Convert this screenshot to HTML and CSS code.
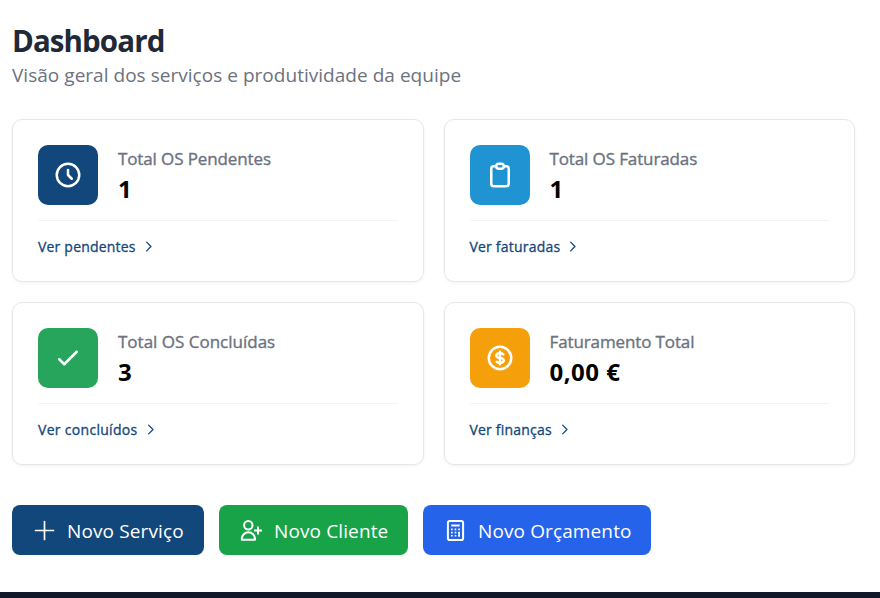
FILE: index.html
```html
<!DOCTYPE html>
<html lang="pt">
<head>
<meta charset="utf-8">
<title>Dashboard</title>
<link rel="stylesheet" href="styles.css">
</head>
<body>
<main class="page">
  <header class="heading">
    <h1 class="title">Dashboard</h1>
    <p class="subtitle">Visão geral dos serviços e produtividade da equipe</p>
  </header>
  <section class="cards">
    <article class="card">
      <div class="summary">
        <div class="tile navy"><svg class="icon" viewBox="0 0 24 24"><path d="M12 8v4l3 3m6-3a9 9 0 11-18 0 9 9 0 0118 0z"/></svg></div>
        <div><div class="label">Total OS Pendentes</div><div class="value">1</div></div>
      </div>
      <a class="link"><span>Ver pendentes</span><svg class="chevron" viewBox="0 0 24 24"><path d="M9 5l7 7-7 7"/></svg></a>
    </article>
    <article class="card">
      <div class="summary">
        <div class="tile sky"><svg class="icon" viewBox="0 0 24 24"><path d="M9 5H7a2 2 0 00-2 2v12a2 2 0 002 2h10a2 2 0 002-2V7a2 2 0 00-2-2h-2M9 5a2 2 0 002 2h2a2 2 0 002-2M9 5a2 2 0 012-2h2a2 2 0 012 2"/></svg></div>
        <div><div class="label">Total OS Faturadas</div><div class="value">1</div></div>
      </div>
      <a class="link"><span>Ver faturadas</span><svg class="chevron" viewBox="0 0 24 24"><path d="M9 5l7 7-7 7"/></svg></a>
    </article>
    <article class="card">
      <div class="summary">
        <div class="tile green"><svg class="icon" viewBox="0 0 24 24"><path d="M5 13l4 4L19 7"/></svg></div>
        <div><div class="label done">Total OS Concluídas</div><div class="value">3</div></div>
      </div>
      <a class="link link-done"><span>Ver concluídos</span><svg class="chevron" viewBox="0 0 24 24"><path d="M9 5l7 7-7 7"/></svg></a>
    </article>
    <article class="card">
      <div class="summary">
        <div class="tile amber"><svg class="icon" viewBox="0 0 24 24"><path d="M12 8c-1.657 0-3 .895-3 2s1.343 2 3 2 3 .895 3 2-1.343 2-3 2m0-8c1.11 0 2.08.402 2.599 1M12 8V7m0 1v8m0 0v1m0-1c-1.11 0-2.08-.402-2.599-1M21 12a9 9 0 11-18 0 9 9 0 0118 0z"/></svg></div>
        <div><div class="label">Faturamento Total</div><div class="value amount">0,00 €</div></div>
      </div>
      <a class="link"><span>Ver finanças</span><svg class="chevron" viewBox="0 0 24 24"><path d="M9 5l7 7-7 7"/></svg></a>
    </article>
  </section>
  <nav class="actions">
    <button class="btn service"><svg class="glyph" viewBox="0 0 25 25"><path d="M12.5 3.5v18M3.5 12.5h18"/></svg><span>Novo Serviço</span></button>
    <button class="btn client"><svg class="glyph" viewBox="0 0 25 25"><circle cx="9.3" cy="7.3" r="4.2"/><path d="M2.8 21.8v-.9a6.6 6.6 0 0113.2 0v.9zM19 8.5v8M15 12.5h8"/></svg><span>Novo Cliente</span></button>
    <button class="btn quote"><svg class="glyph" viewBox="0 0 25 25"><rect x="4.9" y="2.9" width="15.2" height="19.2" rx="1.8"/><path d="M8.3 7.5h8.4"/><path class="keys" d="M8 11.4h1.7M11.6 11.4h1.7M15.2 11.4h1.7M8 14.6h1.7M11.6 14.6h1.7M15.2 14.6h1.7M8 17.8h1.7M11.6 17.8h1.7M15.2 17.8h1.7"/><path class="keys" d="M16.1 14.6v4"/></svg><span>Novo Orçamento</span></button>
  </nav>
</main>
<footer class="footer"></footer>
</body>
</html>
```

FILE: styles.css
```css
* { box-sizing: border-box; }
body {
  margin: 0;
  height: 598px;
  overflow: hidden;
  display: flex;
  flex-direction: column;
  background: #fff;
  font-family: "Open Sans", "Noto Sans", sans-serif;
}
.page { height: 592px; padding: 20px 25px 0 12px; }
.heading { height: 99px; white-space: nowrap; }
.title { margin: 0; padding-top: 1px; font-size: 29.5px; line-height: 39px; font-weight: 700; color: #1f2937; letter-spacing: -0.9px; }
.subtitle { margin: 0; font-size: 19px; line-height: 30px; color: #6b7280; letter-spacing: 0.03px; }
.cards { display: grid; grid-template-columns: 1fr 1fr; gap: 20px; }
.card {
  height: 163px;
  padding: 25px;
  border: 1px solid #e5e7eb;
  border-radius: 10px;
  box-shadow: 0 1px 3px rgba(0, 0, 0, .06);
  white-space: nowrap;
}
.summary { display: flex; gap: 20px; height: 76px; border-bottom: 1px solid #f3f4f6; }
.tile { width: 60px; height: 60px; border-radius: 10px; display: grid; place-items: center; }
.navy { background: #12477b; }
.sky { background: #2094d3; }
.green { background: #27a55c; }
.amber { background: #f59f0a; }
svg { display: block; flex: none; fill: none; stroke: #fff; stroke-width: 2; stroke-linecap: round; stroke-linejoin: round; }
.icon { width: 30px; height: 30px; }
.label { font-size: 17px; line-height: 25px; padding-top: 1px; color: #6b7280; -webkit-text-stroke: 0.35px; letter-spacing: -0.12px; }
.label.done { letter-spacing: 0; }
.value { font-size: 24px; line-height: 35px; font-weight: 700; color: #000; }
.amount { letter-spacing: 0.5px; }
.link { display: flex; align-items: center; gap: 5px; height: 20px; margin-top: 15px; font-size: 14px; letter-spacing: 0.2px; color: #12477b; -webkit-text-stroke: 0.3px; }
.link-done { letter-spacing: 0.3px; }
.chevron { width: 15px; height: 15px; stroke: #12477b; }
.actions { display: flex; gap: 15px; margin-top: 40px; }
.btn {
  height: 50px;
  padding: 0 0 0 20px;
  border: 0;
  border-radius: 8px;
  display: flex;
  align-items: center;
  gap: 10px;
  font: 400 19px "Open Sans", sans-serif;
  letter-spacing: 0.12px;
  color: #fff;
  white-space: nowrap;
}
.btn span { padding-top: 2px; }
.service { width: 192px; background: #12477b; }
.client { width: 189px; background: #18a349; }
.quote { width: 228px; background: #2563eb; }
.glyph { width: 25px; height: 25px; }
.service .glyph { stroke-width: 1.7; }
.client .glyph, .quote .glyph { stroke-linecap: butt; }
.quote .keys { stroke-width: 1.6; }
.footer { height: 6px; background: #111827; }
```
